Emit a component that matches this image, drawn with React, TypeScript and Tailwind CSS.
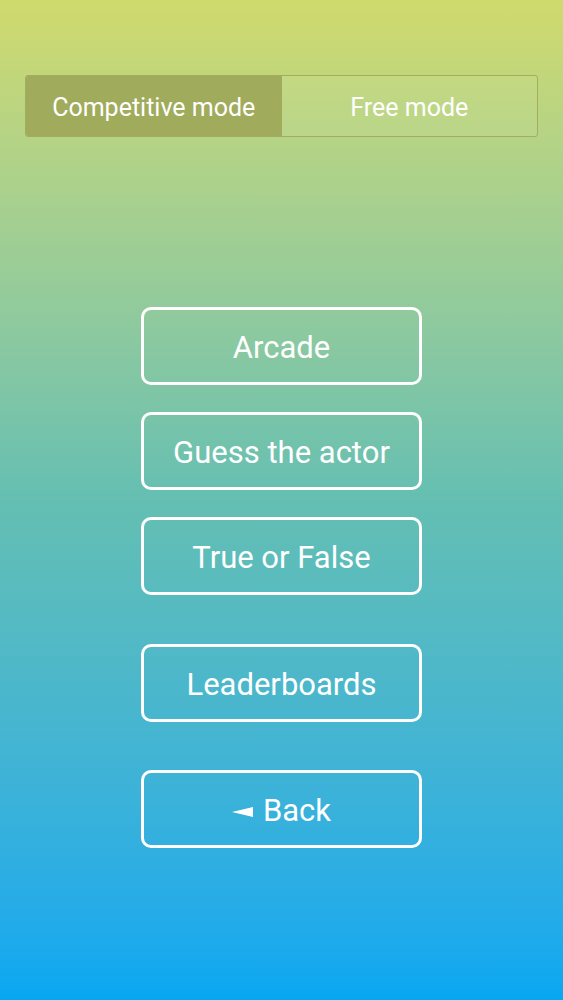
import React, { useState } from 'react';

type Mode = 'competitive' | 'free';

const menuItems = ['Arcade', 'Guess the actor', 'True or False'];

function MenuButton({ label, className = '' }: { label: React.ReactNode; className?: string }) {
  return (
    <button
      type="button"
      className={`flex h-[78px] w-[281px] items-center justify-center rounded-[10px] border-[3px] border-white pt-[5px] text-[31px] text-white ${className}`}
    >
      {label}
    </button>
  );
}

export default function App() {
  const [mode, setMode] = useState<Mode>('competitive');

  return (
    <div
      className="flex h-[1000px] w-full flex-col items-center bg-gradient-to-b from-[#d0da6c] via-[#64bfb2] to-[#06a7f2]"
      style={{ fontFamily: 'Roboto, "Noto Sans", sans-serif' }}
    >
      {/* Mode switch */}
      <div className="mt-[75px] flex h-[62px] w-[513px] overflow-hidden rounded-[3px] border border-[#a3ad5e] text-[25px] text-white">
        <button
          type="button"
          onClick={() => setMode('competitive')}
          className={`flex-1 pt-[3px] ${mode === 'competitive' ? 'bg-[#a0ab5b]' : 'bg-white/[0.05]'}`}
        >
          Competitive mode
        </button>
        <button
          type="button"
          onClick={() => setMode('free')}
          className={`flex-1 pt-[3px] ${mode === 'free' ? 'bg-[#a0ab5b]' : 'bg-white/[0.05]'}`}
        >
          Free mode
        </button>
      </div>

      {/* Menu */}
      <div className="mt-[170px] flex flex-col items-center gap-[27px]">
        {menuItems.map((item) => (
          <MenuButton key={item} label={item} />
        ))}
      </div>

      <MenuButton label="Leaderboards" className="mt-[49px]" />
      <MenuButton
        className="mt-[48px]"
        label={
          <span className="flex items-center">
            <svg width="21" height="10" viewBox="0 0 21 10" className="mr-[10px]">
              <polygon points="0,5 21,0 21,10" fill="white" />
            </svg>
            Back
          </span>
        }
      />
    </div>
  );
}
